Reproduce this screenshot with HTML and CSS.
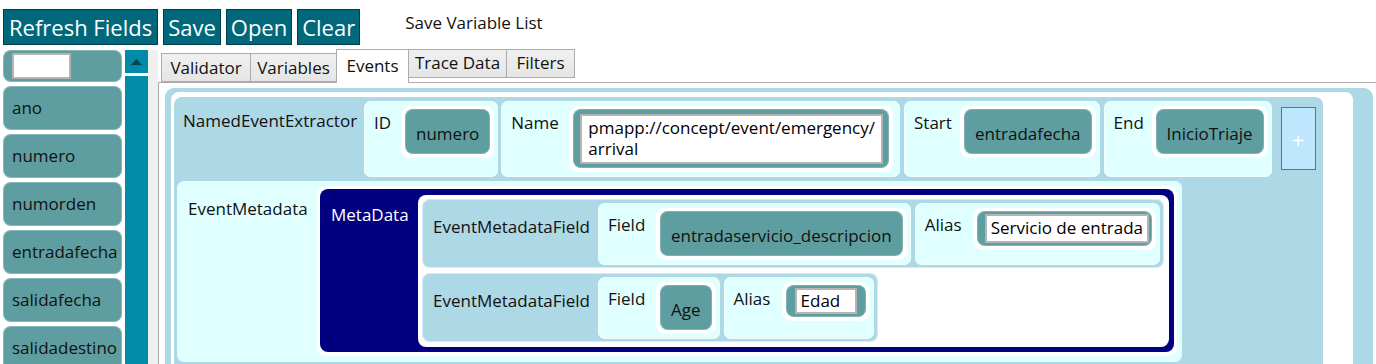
FILE: index.html
```html
<!DOCTYPE html>
<html lang="en">
<head>
    <meta charset="UTF-8">
    <meta name="viewport" content="width=device-width, initial-scale=1.0">
    <title>Event Extractor Editor</title>
    <link rel="stylesheet" href="styles.css">
</head>
<body>
    <div class="toolbar">
        <button class="tool-btn">Refresh Fields</button>
        <button class="tool-btn">Save</button>
        <button class="tool-btn">Open</button>
        <button class="tool-btn">Clear</button>
        <span class="toolbar-note">Save Variable List</span>
    </div>

    <div class="workspace">
        <aside class="field-list">
            <div class="list-items">
                <div class="list-item search"><div class="textbox search-box"></div></div>
                <div class="list-item">ano</div>
                <div class="list-item">numero</div>
                <div class="list-item">numorden</div>
                <div class="list-item">entradafecha</div>
                <div class="list-item">salidafecha</div>
                <div class="list-item">salidadestino</div>
            </div>
            <div class="scrollbar">
                <div class="scroll-up">
                    <svg width="11" height="6" viewBox="0 0 11 6"><path d="M0 6 L5.5 0 L11 6 Z" fill="#0b3f4a"/></svg>
                </div>
                <div class="scroll-track"></div>
            </div>
        </aside>
        <div class="gutter"></div>

        <section class="tabs">
            <div class="tab-strip">
                <div class="tab tab-validator">Validator</div>
                <div class="tab tab-variables">Variables</div>
                <div class="tab tab-events selected">Events</div>
                <div class="tab tab-trace raised">Trace Data</div>
                <div class="tab tab-filters raised">Filters</div>
            </div>

            <div class="tab-content">
                <div class="outer-panel">
                    <div class="white-panel">
                        <div class="extractor">
                            <div class="extractor-row">
                                <div class="node-label extractor-label">NamedEventExtractor</div>

                                <div class="prop">
                                    <div class="prop-label w-id">ID</div>
                                    <div class="frame"><div class="value">numero</div></div>
                                </div>
                                <div class="prop prop-name">
                                    <div class="prop-label w-name">Name</div>
                                    <div class="frame">
                                        <div class="value value-input name-input">
                                            <div class="textbox multiline">pmapp://concept/event/emergency/<br>arrival</div>
                                        </div>
                                    </div>
                                </div>
                                <div class="prop">
                                    <div class="prop-label w-start">Start</div>
                                    <div class="frame"><div class="value">entradafecha</div></div>
                                </div>
                                <div class="prop">
                                    <div class="prop-label w-end">End</div>
                                    <div class="frame"><div class="value">InicioTriaje</div></div>
                                </div>
                                <button class="add-btn">+</button>
                            </div>

                            <div class="metadata-card">
                                <div class="node-label metadata-label">EventMetadata</div>
                                <div class="frame meta-frame">
                                    <div class="meta-box">
                                        <div class="meta-title">MetaData</div>
                                        <div class="meta-list">
                                            <div class="meta-field">
                                                <div class="node-label field-label">EventMetadataField</div>
                                                <div class="prop">
                                                    <div class="prop-label w-field">Field</div>
                                                    <div class="frame"><div class="value">entradaservicio_descripcion</div></div>
                                                </div>
                                                <div class="prop">
                                                    <div class="prop-label w-alias">Alias</div>
                                                    <div class="frame">
                                                        <div class="value value-input alias-input">
                                                            <div class="textbox">Servicio de entrada</div>
                                                        </div>
                                                    </div>
                                                </div>
                                            </div>
                                            <div class="meta-field">
                                                <div class="node-label field-label">EventMetadataField</div>
                                                <div class="prop">
                                                    <div class="prop-label w-field">Field</div>
                                                    <div class="frame"><div class="value">Age</div></div>
                                                </div>
                                                <div class="prop">
                                                    <div class="prop-label w-alias">Alias</div>
                                                    <div class="frame">
                                                        <div class="value value-input alias-input short">
                                                            <div class="textbox edad">Edad</div>
                                                        </div>
                                                    </div>
                                                </div>
                                            </div>
                                        </div>
                                    </div>
                                </div>
                            </div>
                        </div>
                    </div>
                </div>
            </div>
        </section>
    </div>
</body>
</html>
```

FILE: styles.css
```css
body {
    margin: 0;
    height: 364px;
    overflow: hidden;
    background: #fff;
    color: #111;
    font-family: "Open Sans", "Noto Sans", sans-serif;
    font-size: 17px;
    line-height: 22px;
}

/* toolbar */
.toolbar {
    display: flex;
    align-items: center;
    gap: 5px;
    padding: 9px 0 0 3px;
    height: 36px;
}
.tool-btn {
    height: 36px;
    padding: 0 5px;
    font-family: inherit;
    font-size: 22px;
    color: #fff;
    background: #00687a;
    border: 1px solid #003f4a;
}
.tool-btn + .tool-btn {
    padding: 0 4px;
}
.toolbar-note {
    align-self: flex-start;
    margin: 3px 0 0 40px;
}

.workspace {
    display: flex;
    height: 315px;
    margin-top: 4px;
}

/* left field list */
.field-list {
    display: flex;
    gap: 3px;
    width: 148px;
    padding: 1px 0 0 3px;
    box-sizing: border-box;
    overflow: hidden;
}
.list-items {
    display: flex;
    flex-direction: column;
    gap: 4px;
    width: 119px;
}
.list-item {
    display: flex;
    flex: 0 0 auto;
    align-items: center;
    height: 44px;
    padding: 0 9px;
    background: #5f9ea0;
    border-radius: 8px;
    box-shadow: inset 0 0 0 1px rgba(255, 255, 255, 0.25);
    white-space: nowrap;
    overflow: hidden;
}
.list-item.search {
    height: 32px;
}
.search-box {
    width: 59px;
    height: 26px;
    box-sizing: border-box;
}
.scrollbar {
    display: flex;
    flex-direction: column;
    gap: 3px;
    width: 23px;
}
.scroll-up {
    display: flex;
    align-items: center;
    justify-content: center;
    height: 23px;
    background: #008ca8;
}
.scroll-track {
    flex: 1;
    background: #008ca8;
}
.gutter {
    width: 10px;
    margin-top: 1px;
    background: #f0f0f0;
}

/* tabs */
.tabs {
    flex: 1;
    display: flex;
    flex-direction: column;
    overflow: hidden;
}
.tab-strip {
    display: flex;
    flex: 0 0 auto;
    align-items: flex-end;
    height: 33px;
    padding-left: 3px;
}
.tab {
    height: 29px;
    box-sizing: border-box;
    padding: 3px 0 0;
    text-align: center;
    background: linear-gradient(#f0f0f0, #e5e5e5);
    border: 1px solid #acacac;
    border-right: none;
}
.tab-validator { width: 89px; }
.tab-variables { width: 86px; }
.tab-events { width: 73px; }
.tab-trace { width: 97px; }
.tab-filters { width: 69px; border-right: 1px solid #acacac; }
.tab.selected {
    height: 34px;
    margin-bottom: -1px;
    padding-top: 5px;
    background: #fff;
    border-bottom: none;
    border-right: 1px solid #acacac;
    position: relative;
    z-index: 1;
}
.tab.selected + .tab {
    border-left: none;
}
.tab.raised {
    height: 29px;
    margin-bottom: 4px;
    padding-top: 2px;
}
.tab-content {
    flex: 1;
    padding: 5px 3px 0 6px;
    background: #fff;
    border-top: 1px solid #acacac;
    border-left: 1px solid #acacac;
    overflow: hidden;
}

/* event extractor */
.outer-panel {
    padding: 4px 20px 0 6px;
    background: #add8e6;
    border-radius: 9px 9px 0 0;
}
.white-panel {
    padding: 5px 30px 0 3px;
    background: #fff;
    border-radius: 8px 8px 0 0;
}
.extractor {
    display: flex;
    flex-direction: column;
    gap: 4px;
    padding: 4px 3px;
    background: #add8e6;
    border-radius: 8px 8px 0 0;
}
.extractor-row {
    display: flex;
    gap: 4px;
}
.node-label {
    flex: 0 0 auto;
    box-sizing: border-box;
    white-space: nowrap;
}
.extractor-label {
    width: 183px;
    padding: 9px 6px;
}
.prop {
    display: flex;
    align-items: flex-start;
    padding: 5px 4px 5px 0;
    background: #e0ffff;
    border-radius: 7px;
    box-shadow: inset 0 0 0 1px rgba(255, 255, 255, 0.6);
}
.prop-name {
    margin-left: -1px;
    padding-right: 7px;
}
.prop-label {
    box-sizing: border-box;
    padding: 6px 0 0 10px;
    white-space: nowrap;
}
.w-id { width: 37px; }
.w-name { width: 68px; }
.w-start { width: 56px; }
.w-end { width: 48px; }
.w-field { width: 58px; }
.w-alias { width: 58px; }

.frame {
    padding: 3px 4px 4px;
    background: #fff;
    border-radius: 9px;
}
.value {
    padding: 14px 11px 9px;
    background: #5f9ea0;
    border-radius: 8px;
    box-shadow: inset 0 0 0 1px rgba(255, 255, 255, 0.2);
    white-space: nowrap;
}
.value-input {
    padding: 5px 6px 4px 7px;
}
.alias-input {
    padding: 3px 3px 3px 8px;
}
.alias-input.short {
    padding: 3px 9px;
}
.textbox {
    padding: 1px 4px 2px;
    background: #fff;
    border: 2px solid #b4b4b4;
    color: #000;
}
.multiline {
    line-height: 21px;
    padding: 1px 6px 3px 6px;
}
.edad {
    width: 62px;
    padding: 0 4px;
    box-sizing: border-box;
}
.add-btn {
    align-self: flex-start;
    width: 35px;
    height: 63px;
    margin: 6px 0 0 5px;
    padding: 0;
    color: #fff;
    font-family: inherit;
    font-size: 22px;
    background: #bee6fd;
    border: 1px solid #3c7fb1;
}

/* metadata */
.metadata-card {
    display: flex;
    align-items: flex-start;
    align-self: flex-start;
    padding: 5px 5px 6px 0;
    background: #e0ffff;
    border-radius: 7px;
}
.metadata-label {
    width: 140px;
    padding: 12px 11px;
}
.meta-frame {
    padding: 3px 3px 4px;
}
.meta-box {
    display: flex;
    align-items: flex-start;
    padding: 6px 5px 5px 0;
    background: #000080;
    border-radius: 8px;
}
.meta-title {
    width: 98px;
    box-sizing: border-box;
    padding: 9px 11px;
    color: #fff;
}
.meta-list {
    display: flex;
    flex-direction: column;
    align-items: flex-start;
    gap: 5px;
    padding: 4px 5px 5px 4px;
    background: #fff;
    border-radius: 8px;
}
.meta-field {
    display: flex;
    gap: 4px;
    padding: 4px 4px 3px 0;
    background: #add8e6;
    border-radius: 8px;
    box-shadow: inset 0 0 0 1px rgba(255, 255, 255, 0.5);
}
.field-label {
    width: 172px;
    padding: 13px 11px 0;
}
```
